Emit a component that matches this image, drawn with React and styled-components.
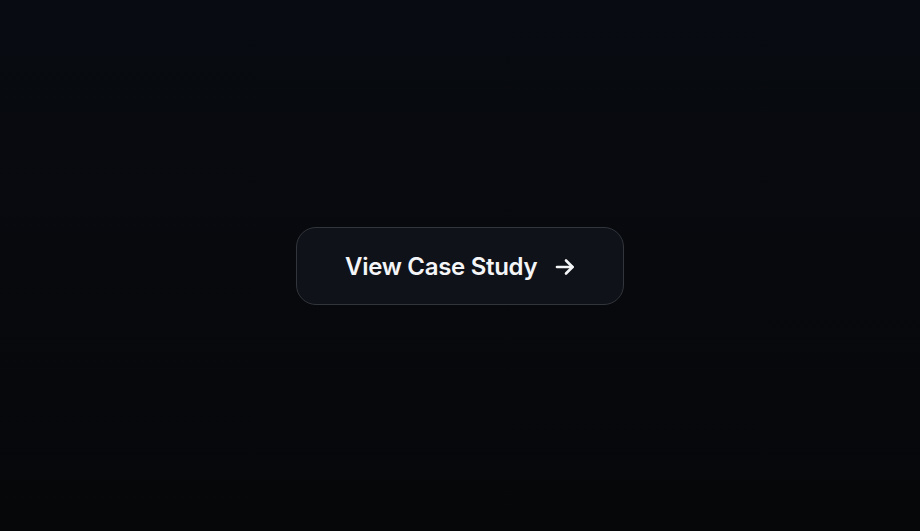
import styled, { createGlobalStyle } from "styled-components";

const GlobalStyle = createGlobalStyle`
    html, body {
        margin: 0;
        padding: 0;
    }
    body {
        font-family: Inter, "Noto Sans", sans-serif;
        background: #07090d;
    }
`

const StyledPage = styled.div`
    display: flex;
    align-items: center;
    justify-content: center;
    width: 100%;
    height: 531px;
    background: linear-gradient(180deg, #080b11 0%, #07090d 50%, #060709 100%);
`

const StyledButton = styled.button`
    display: flex;
    align-items: center;
    gap: 18px;
    box-sizing: border-box;
    width: 328px;
    height: 78px;
    padding: 2px 0 0 48px;
    border-radius: 20px;
    border: 1.5px solid #32353b;
    background-color: #0f1218;
    color: #f4f5f7;
    font-family: Inter, "Noto Sans", sans-serif;
    font-size: 24px;
    font-weight: 600;
    letter-spacing: -0.3px;
    cursor: pointer;
`

const StyledArrow = styled.svg`
    width: 20px;
    height: 20px;
`

function App() {
    return (
        <>
            <GlobalStyle />
            <StyledPage>
                <StyledButton>
                    View Case Study
                    <StyledArrow viewBox="0 0 20 20" fill="none" stroke="currentColor" strokeWidth="2.6" strokeLinecap="round" strokeLinejoin="round">
                        <path d="M2 10h15.5" />
                        <path d="M11 3.5l6.5 6.5-6.5 6.5" />
                    </StyledArrow>
                </StyledButton>
            </StyledPage>
        </>
    )
}

export default App
